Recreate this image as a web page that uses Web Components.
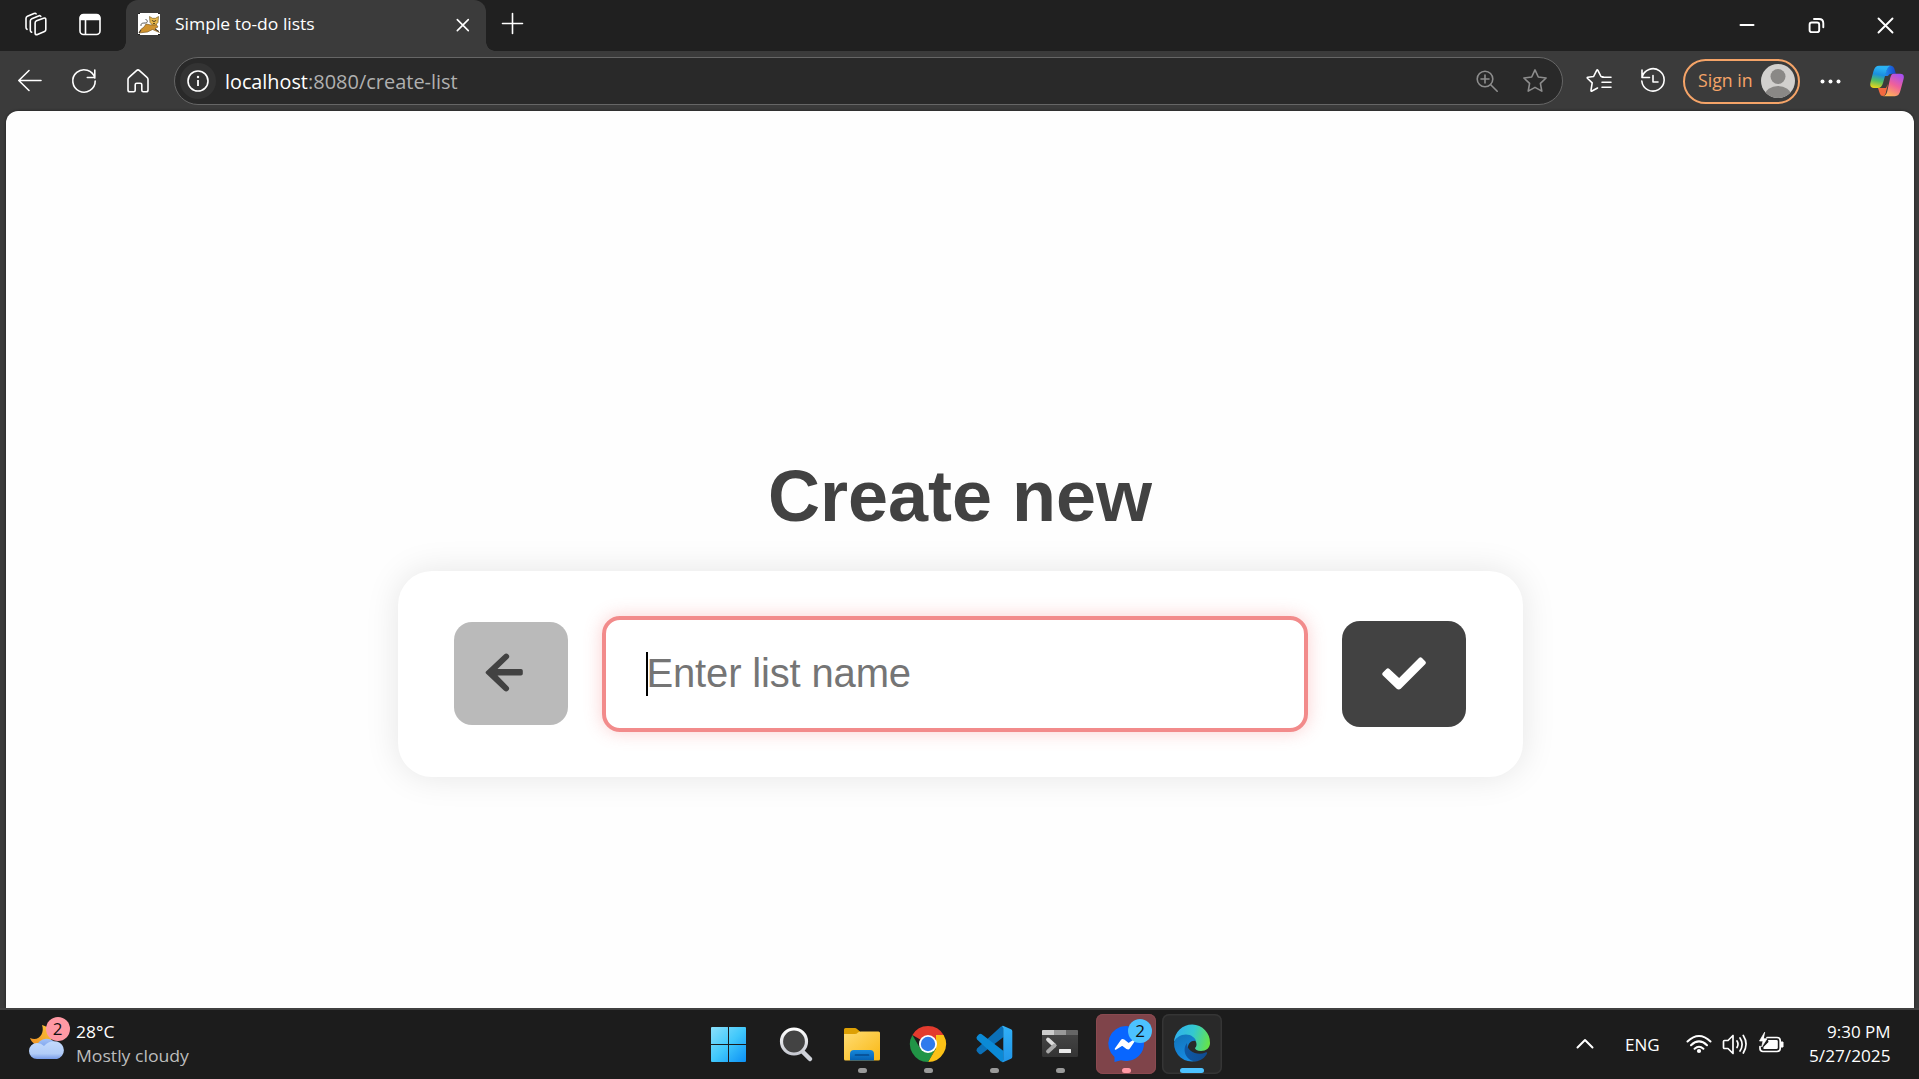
<!DOCTYPE html>
<html lang="en">
<head>
<meta charset="utf-8">
<title>Simple to-do lists</title>
<style>
html,body{margin:0;height:100%;overflow:hidden;background:#3b3b3b}
body{font-family:"Open Sans","Noto Sans",sans-serif}
</style>
</head>
<body>
<desktop-screen></desktop-screen>
<script>
const define = (name, html, init) => customElements.define(name, class extends HTMLElement {
  constructor() {
    super();
    const t = document.createElement('template');
    t.innerHTML = html;
    this.attachShadow({mode: 'open'}).append(t.content.cloneNode(true));
  }
  connectedCallback() { if (init) init(this); }
});

/* Text squeezed horizontally to a given width */
define('fit-text', `<style>
:host{display:block;white-space:pre;text-align:left}
span{display:inline-block;transform-origin:0 50%}
</style><span><slot></slot></span>`, el => {
  const w = +el.getAttribute('w');
  el.style.width = w + 'px';
  const s = el.shadowRoot.querySelector('span');
  s.style.transform = 'scaleX(' + w / s.offsetWidth + ')';
});

define('icon-button', `<style>
:host{display:flex;align-items:center;justify-content:center;width:54px;height:48px;flex:none;color:#fff}
::slotted(svg){display:block;fill:none;stroke:currentColor;stroke-width:1.6;stroke-linecap:round;stroke-linejoin:round;flex:none}
</style><slot></slot>`);

define('browser-tab', `<style>
:host{display:flex;align-items:center;width:360px;height:51px;margin-left:9px;box-sizing:border-box;padding:0 13px 0 12px;background:#3b3b3b;border-radius:12px 12px 0 0;position:relative;color:#fff}
:host::before,:host::after{content:"";position:absolute;bottom:0;width:9px;height:9px}
:host::before{left:-9px;background:radial-gradient(circle at 0 0,transparent 8.5px,#3b3b3b 9px)}
:host::after{right:-9px;background:radial-gradient(circle at 100% 0,transparent 8.5px,#3b3b3b 9px)}
.fav{display:block;width:22px;height:22px;margin:-3px 15px 0 0}
fit-text{font-size:17px;line-height:24px;margin-top:-4px}
.x{margin:-2px 0 0 auto;display:block}
</style>
<svg class="fav" viewBox="0 0 22 22"><path fill="#fff" d="M0 0h22v22H0z"/><path d="M0 0h2v1H0zM20 0h2v1h-2zM0 21h2v1H0zM20 21h2v1h-2z" fill="#222"/><path d="M1 20q1-4 5-6l2-3 5 1 5-1 2 3-3 1.500 4.500 4-7-3-5 2.500-4.500.5z" fill="#d0932f" stroke="#6b4c17" stroke-width=".6"/><path d="M11.500 3.500l3 1.800h3l3-1.800-.5 6-2.500 2.500h-3L12 9.500z" fill="#e8b84b" stroke="#654912" stroke-width=".6"/><path d="M14 7l1 1.500L16 8l1 .5L18 7M15 10.500h2" stroke="#382f1a" fill="none" stroke-width=".8"/><path d="M7.500 6.500c3 .5 2 4-.5 3.500-4 0-4 1-4 3" fill="none" stroke="#444" stroke-width=".9"/><path d="M17 16l4 2.500M1 20l2-3" stroke="#333" stroke-width="1"/></svg>
<fit-text w="140"><slot></slot></fit-text>
<svg class="x" width="20" height="20" viewBox="0 0 20 20" fill="none" stroke="#fff" stroke-width="1.6" stroke-linecap="round"><path d="M4.300 4.600l11 11M15.300 4.600l-11 11"/></svg>`);

define('tab-strip', `<style>
:host{display:flex;height:51px;background:#202020;padding-left:9px;flex:none}
.win{margin-left:auto;display:flex}
.win icon-button{width:69px;height:51px}
</style>
<icon-button><svg width="28" height="28" viewBox="0 0 28 28" style="margin-right:2px"><path d="M15.500 10.800l7.100-2.600q2.200-.7 2.200 1.500v9.800q0 1.500-1.300 2l-7 2.900q-2.400.9-2.400-1.500V13q0-1.600 1.400-2.200z"/><path d="M10.600 22.200q-1.300-.4-1.300-2V11q0-1.700 1.500-2.300l6.700-2.800q2-.7 2.300.5"/><path d="M6 19.300q-1-.5-1-2V8.500q0-1.500 1.400-2.200l6.600-2.800q1.600-.6 2.100.4"/></svg></icon-button>
<icon-button><svg width="28" height="28" viewBox="0 0 28 28"><rect x="4" y="4.500" width="20" height="20" rx="3.500"/><path d="M4.500 9.500V8q0-3 3-3h13q3 0 3 3v1.500z" fill="#fff"/><path d="M9.500 10v14"/></svg></icon-button>
<browser-tab>Simple to-do lists</browser-tab>
<icon-button><svg width="24" height="24" viewBox="0 0 24 24"><path d="M11.500 1.500v20M1.500 11.500h20"/></svg></icon-button>
<div class="win">
<icon-button><svg width="20" height="20" viewBox="0 0 20 20" stroke-linecap="butt"><path d="M3.500 9h13" stroke-width="2"/></svg></icon-button>
<icon-button><svg width="20" height="20" viewBox="0 0 20 20"><rect x="3.600" y="6.500" width="9.600" height="9.600" rx="2.200" stroke-width="1.900"/><path d="M8 3h5q4.300 0 4.300 4.300v4" stroke-width="1.900"/></svg></icon-button>
<icon-button><svg width="20" height="20" viewBox="0 0 20 20"><path d="M3.500 2.500l14 14M17.500 2.500l-14 14" stroke-width="1.900"/></svg></icon-button>
</div>`);

define('address-bar', `<style>
:host{display:flex;align-items:center;flex:none;width:1389px;height:48px;box-sizing:border-box;margin:0 9px;background:#292929;border:1.500px solid #666;border-radius:24px;padding:0 3px 0 5px}
.info{display:flex;align-items:center;justify-content:center;width:36px;height:36px;border-radius:50%;background:#333;margin-right:9px}
fit-text{font-size:20.500px;line-height:30px}
.host{color:#fff}.path{color:#b0b0b0}
.tools{display:flex;margin-left:auto}
.tools icon-button{color:#8d8d8d;width:48px}
</style>
<span class="info"><svg width="24" height="24" viewBox="0 0 24 24" fill="none" stroke="#fff" stroke-width="1.600"><circle cx="12" cy="12" r="10"/><path d="M12 11v6" stroke-width="1.800"/><circle cx="12" cy="8" r="1.200" fill="#fff" stroke="none"/></svg></span>
<fit-text class="host" w="83">localhost</fit-text><fit-text class="path" w="150">:8080/create-list</fit-text>
<div class="tools">
<icon-button><svg width="26" height="26" viewBox="0 0 26 26"><circle cx="11" cy="11" r="7.800"/><path d="M11 7v8M7 11h8M16.700 16.700l6.500 6.500"/></svg></icon-button>
<icon-button><svg width="28" height="28" viewBox="0 0 28 28"><path d="M14 2.900l3.300 7.100 7.800 1-5.700 5.400 1.400 7.700-6.800-3.700-6.800 3.700 1.400-7.700-5.700-5.400 7.800-1z"/></svg></icon-button>
</div>`);

define('sign-in', `<style>
:host{display:flex;align-items:center;box-sizing:border-box;width:117px;height:45px;border:2px solid #f5a468;border-radius:23px;margin:0 3px 0 3px;padding:0 3px 0 13px;justify-content:space-between;color:#f5a468;flex:none}
fit-text{font-size:18px;line-height:26px;margin-top:-2px}
</style><fit-text w="55">Sign in</fit-text>
<svg width="34" height="34" viewBox="0 0 34 34"><defs><clipPath id="c"><circle cx="17" cy="17" r="17"/></clipPath></defs><g clip-path="url(#c)"><path fill="#d2d0ce" d="M0 0h34v34H0z"/><circle cx="17" cy="12.500" r="7.500" fill="#8a8886"/><ellipse cx="17" cy="31" rx="13" ry="9" fill="#8a8886"/></g></svg>`);

define('tool-bar', `<style>
:host{display:flex;align-items:center;height:60px;padding-left:3px;box-sizing:border-box;flex:none;background:#3b3b3b}
</style>
<icon-button><svg width="28" height="28" viewBox="0 0 28 28"><path d="M25 13.500H3M13 3.500L2.800 13.500 13 23.500"/></svg></icon-button>
<icon-button><svg width="28" height="28" viewBox="0 0 28 28"><path d="M24.800 11A11.200 11.200 0 1 0 25.200 14M24.800 3v7.500h-7.500"/></svg></icon-button>
<icon-button><svg width="28" height="28" viewBox="0 0 28 28"><path d="M4 12.500q0-1.300 1-2.100l7.500-6.800q1.500-1.300 3 0l7.500 6.800q1 .8 1 2.100V23q0 1.800-1.800 1.800h-2.900q-1.500 0-1.500-1.500v-5.500q0-1.500-1.500-1.500h-3.600q-1.500 0-1.500 1.500v5.500q0 1.500-1.500 1.500H5.800Q4 24.800 4 23z"/></svg></icon-button>
<address-bar></address-bar>
<icon-button><svg width="28" height="28" viewBox="0 0 28 28"><path d="M18 9.800l-2-.3-3.100-6.200q-.6-1-1.200 0L8.600 9.500l-5.700.8q-1.300.2-.3 1.200l4.600 4.400L6 23.200q-.2 1.500 1 .8l5.500-3M17 10.300h9M17 15.300h9M17 20.300h9"/></svg></icon-button>
<icon-button><svg width="28" height="28" viewBox="0 0 28 28"><path d="M3 10.500A11.200 11.200 0 1 1 2.800 14M3 3v7.500h7.500M14 8.500V15h5"/></svg></icon-button>
<sign-in></sign-in>
<icon-button><svg width="28" height="28" viewBox="0 0 28 28"><g fill="#fff" stroke="none"><circle cx="6.500" cy="14.500" r="2"/><circle cx="14.500" cy="14.500" r="2"/><circle cx="22.500" cy="14.500" r="2"/></g></svg></icon-button>
<icon-button style="margin-left:3px"><svg width="34" height="32" viewBox="0 0 34 32" style="stroke:none"><defs>
<linearGradient id="a" x1=".5" y1="0" x2=".3" y2="1"><stop offset=".1" stop-color="#2bb2f3"/><stop offset=".4" stop-color="#1b8fdf"/><stop offset=".68" stop-color="#52bd65"/><stop offset="1" stop-color="#e8d51c"/></linearGradient>
<linearGradient id="b" x1=".8" y1="0" x2=".3" y2="1"><stop offset="0" stop-color="#a64ff3"/><stop offset=".5" stop-color="#f0609a"/><stop offset="1" stop-color="#ffb557"/></linearGradient>
<linearGradient id="d"><stop offset="0" stop-color="#2190ef"/><stop offset="1" stop-color="#1745cb"/></linearGradient></defs>
<path d="M18 .8h3q2.400 0 3.200 2.500l1.700 5.400h-4q-3 0-4 2.300h-3.500z" fill="url(#d)"/><path d="M8 23h8l2-4-1.500 6q-1 6-3.500 6-2.500 0-3.200-2.500z" fill="#f3693f"/>
<path d="M9 .8h12.500q-3.500 0-5 5L13 18q-1.400 5-5 5H4Q-1 23 .6 17L3.500 6Q5 .8 9 .8z" fill="url(#a)"/>
<path d="M23.500 8.700H30q5 0 3.500 5.500L30.300 26q-1.300 5.200-5.300 5.200H12.500q3.500 0 4.700-4.700l3-13.500q1-4.300 3.300-4.300z" fill="url(#b)"/></svg></icon-button>`);

define('list-form', `<style>
:host{display:flex;align-items:center;gap:34px;box-sizing:border-box;width:1125px;height:206px;padding:0 57px 0 56px;background:#fff;border-radius:34px;box-shadow:0 0 34px rgba(0,0,0,.1)}
.b{display:flex;align-items:center;justify-content:center;border-radius:18px;flex:none}
.back{width:114px;height:103px;background:#bababa;margin-top:-1px}
.ok{width:124px;height:106px;background:#424242}
.in{flex:1;height:116px;box-sizing:border-box;border:4px solid #f28b8b;border-radius:18px;box-shadow:0 0 18px rgba(242,110,110,.32);padding:0 40px;display:flex;align-items:center;font:40px/46px "Liberation Sans",Arial,sans-serif;color:#757575}
.caret{width:2px;height:44px;background:#000;margin-right:-2px}
.ph{margin:-2px 0 0 1px;letter-spacing:-.16px}
svg{display:block}
</style>
<div class="b back"><svg width="40" height="40" viewBox="0 0 40 40" style="margin:-4px 14px 0 0"><path d="M37 17H13.500L24.300 6.400q2-2 0-4-2-2-4.200 0L2 19.600q-.8.900 0 1.800l18 17q2.200 2 4.200 0 2-2 0-4L13.500 23.600H37q1.800 0 1.800-1.800v-3q0-1.800-1.800-1.800z" fill="#424242"/></svg></div>
<div class="in"><span class="caret"></span><span class="ph">Enter list name</span></div>
<div class="b ok"><svg width="44" height="34" viewBox="0 0 44 34"><path d="M16.700 32.500q-1.200 0-2-.8L.9 18.500q-1.400-1.500 0-3l3.500-3.500q1.500-1.400 3 0l9.700 9L37 1q1.500-1.400 3 0l3.200 3.300q1.400 1.500 0 3L18.700 31.700q-.8.800-2 .8z" fill="#fff"/></svg></div>`);

define('web-page', `<style>
:host{display:flex;flex-direction:column;align-items:center;flex:none;width:1908px;height:897px;margin-left:6px;box-sizing:border-box;padding-top:344px;background:#fefefe;border-radius:12px 12px 0 0;box-shadow:0 0 3px rgba(0,0,0,.5)}
h1{margin:0 0 33px;font:bold 72px/83px "Liberation Sans",Arial,sans-serif;color:#424242}
</style><h1>Create new</h1><list-form></list-form>`);

define('task-tile', `<style>
:host{display:block;width:60px;height:60px;flex:none;border-radius:7px;position:relative;box-sizing:border-box}
:host([alert]){background:#7f444a;box-shadow:inset 0 0 0 1px #8a4a50}
:host([active]){background:#292929;box-shadow:inset 0 0 0 1.500px #353535}
:host([run])::after{content:"";position:absolute;left:26px;top:54px;width:9px;height:5px;border-radius:3px;background:#9a9a9a}
:host([alert])::after{background:#ff99a4}
:host([active])::after{left:18px;width:24px;background:#4cc2ff}
::slotted(svg){display:block;width:60px;height:60px}
</style><slot></slot>`);

define('count-badge', `<style>
:host{position:absolute;width:24px;height:24px;border-radius:50%;text-align:center;font-size:17px;line-height:23px;color:#111;background:var(--c)}
</style><slot></slot>`);

define('weather-widget', `<style>
:host{display:flex;width:300px;padding-left:29px;box-sizing:border-box;position:relative}
.i{width:36px;height:60px;margin-right:11px;margin-top:-1px}
.t{font-size:17px;line-height:24px;color:#fff;padding-top:6px}
.t fit-text+fit-text{color:#bdbdbd}
count-badge{left:45.500px;top:3px;--c:#ff99a4}
</style>
<svg class="i" viewBox="0 0 36 60"><defs><linearGradient id="m" x1="0" y1="1" x2="1" y2="0"><stop stop-color="#ef8f22"/><stop offset="1" stop-color="#fbc63b"/></linearGradient><linearGradient id="k" x2="0" y2="1"><stop stop-color="#c3dafc"/><stop offset=".7" stop-color="#b1ccf7"/><stop offset="1" stop-color="#779be8"/></linearGradient><linearGradient id="k2" x2="0" y2="1"><stop stop-color="#a3c2f7"/><stop offset="1" stop-color="#7ea4ee"/></linearGradient></defs>
<path d="M13 12c3 8-3 17-12 13 3 9 16 11 21 3 3-7-1-14-9-16z" fill="url(#m)"/>
<path d="M7 34a11 11 0 0 1 21-1z" fill="url(#k2)"/>
<path d="M8 46a8 8 0 0 1 0-16q4 0 7 3 5-6 13-4.500a9 9 0 0 1 0 17.500z" fill="url(#k)"/></svg>
<div class="t"><fit-text w="38">28°C</fit-text><fit-text w="113">Mostly cloudy</fit-text></div>
<count-badge>2</count-badge>`);

define('system-tray', `<style>
:host{display:flex;color:#fff;font-size:17px;height:60px;align-items:center;width:346px;flex:none}
svg{display:block;flex:none;fill:none;stroke:#fff;stroke-width:1.700;stroke-linecap:round;stroke-linejoin:round}
.dt{margin-left:auto;margin-right:28px;line-height:24px;display:flex;flex-direction:column;align-items:flex-end;margin-top:-1px}
.eng{margin:0 25px 0 30px}
</style>
<svg style="margin-left:2px" width="20" height="20" viewBox="0 0 20 20"><path d="M2.500 13.500L10 6l7.500 7.500" stroke-width="2"/></svg>
<fit-text class="eng" w="35">ENG</fit-text>
<svg width="28" height="28" viewBox="0 0 28 28" stroke-linecap="butt"><path d="M2.500 11.500q11.500-11 23 0M6 15.200q8-7.600 16 0M9.600 18.800q4.400-4 8.800 0" stroke-width="2"/><circle cx="14" cy="21" r="2.100" fill="#fff" stroke="none"/></svg>
<svg style="margin-left:8px" width="28" height="28" viewBox="0 0 28 28"><path d="M2.500 11.500q0-1 1-1h3.500l5-5v18l-5-5H3.500q-1 0-1-1zM16 11q2 3 0 6.500M19 8q4.200 6.500 0 13M22.300 5.500q5.500 8.500 0 17.500"/></svg>
<svg style="margin-left:8px" width="28" height="28" viewBox="0 0 28 28"><path d="M10 7.500h10q3.200 0 3.200 3.200v7.600q0 3.200-3.200 3.200H6q-3 0-3-3v-2"/><path d="M11 10h8.500q1.300 0 1.300 1.300v6.400q0 1.300-1.300 1.300H6.500v-2l5-5z" fill="#fff" stroke="none"/><path d="M24 12h2v5h-2z" fill="#fff" stroke-width="1"/><path d="M7.500 2.500L2.500 11H6l-1.300 6L10 8.700H6.700z" fill="#fff" stroke-width=".7"/></svg>
<div class="dt"><fit-text w="64">9:30 PM</fit-text><fit-text w="82">5/27/2025</fit-text></div>`);

define('task-bar', `<style>
:host{display:flex;justify-content:space-between;height:71px;flex:none;background:#1c1c1c;border-top:2px solid #404040;box-sizing:border-box;padding-top:4px}
.apps{display:flex;gap:6px;width:522px;margin-right:51px}
weather-widget{margin-right:100px}
count-badge{left:32px;top:5px;--c:#4cc2ff}
</style>
<weather-widget></weather-widget>
<div class="apps">
<task-tile><svg viewBox="0 0 60 60"><defs><linearGradient id="w" x2="1" y2="1"><stop stop-color="#8be0fb"/><stop offset=".5" stop-color="#41c8fb"/><stop offset="1" stop-color="#0b90f5"/></linearGradient></defs><path fill="url(#w)" d="M12 13h15.700a.5.500 0 0 1 .3.500V30H11V14q0-1 1-1zM29 13h16q1 0 1 1v16H29zM11 31h17v17H12q-1 0-1-1zM29 31h17v16q0 1-1 1H29z"/></svg></task-tile>
<task-tile><svg viewBox="0 0 60 60"><defs><linearGradient id="s" x2="0" y2="1"><stop stop-color="#fff"/><stop offset="1" stop-color="#c7c9d1"/></linearGradient></defs><path d="M37 38l7 7" stroke="#cfd2d9" stroke-width="4.500" stroke-linecap="round"/><circle cx="28" cy="27.500" r="12.500" fill="#434343" stroke="url(#s)" stroke-width="3.200"/></svg></task-tile>
<task-tile run><svg viewBox="0 0 60 60"><defs><linearGradient id="f" x2="1" y2="1"><stop stop-color="#ffdc73"/><stop offset="1" stop-color="#f9b813"/></linearGradient><linearGradient id="g" x2="0" y2="1"><stop stop-color="#1688dc"/><stop offset="1" stop-color="#0560b1"/></linearGradient></defs><path d="M12 15.500q0-1.500 1.500-1.500h9.500q1 0 2 1l3 2.500V24H12z" fill="#dda004"/><path d="M12 20h11q1.500 0 3-1.500 1-1 3-1h17.500q1.500 0 1.500 1.500v26q0 1.500-1.500 1.500h-33Q12 46.500 12 45z" fill="url(#f)"/><path d="M18 46.500V40q0-4 4-4h16q4 0 4 4v6.500z" fill="url(#g)"/><path d="M23.500 41h13" stroke="#064a8d" stroke-width="1.700" stroke-linecap="round"/></svg></task-tile>
<task-tile run><svg viewBox="0 0 60 60"><path d="M30 30L14.400 21A18 18 0 0 1 45.600 21z" fill="#e33b2e"/><path d="M14.400 21L22.200 34.500 30 39l0 9A18 18 0 0 1 14.400 21z" fill="#219446"/><path d="M30 48l8-13.500V21h7.600A18 18 0 0 1 30 48z" fill="#fbc116"/><path d="M22.200 34.500L30 48l7.800-13.500z" fill="#219446"/><path d="M30 48l8-14 4-8z" fill="#fbc116"/><circle cx="30" cy="30" r="9" fill="#fff"/><circle cx="30" cy="30" r="7.200" fill="#2f7bed"/></svg></task-tile>
<task-tile run><svg viewBox="0 0 60 60"><defs><linearGradient id="v" x2="0" y2="1"><stop stop-color="#31b0f7"/><stop offset="1" stop-color="#2196e8"/></linearGradient></defs><path d="M13 34.500q-1.300 2 .3 3.600l1.700 1.700q1.200 1 2.800 0L39.500 23V12L37 12.500z" fill="#0b70b8"/><path d="M13 25.500q-1.300-2 .3-3.600l1.700-1.700q1.200-1 2.800 0L39.500 37v11L37 47.500z" fill="#0b8ad6"/><path d="M38 12l1-.2 8 3.500q1.300.6 1.300 2v25.400q0 1.400-1.300 2l-8 3.500-1-.2 1.300-2V14z" fill="url(#v)"/></svg></task-tile>
<task-tile run><svg viewBox="0 0 60 60"><defs><linearGradient id="t" x2="0" y2="1"><stop stop-color="#474747"/><stop offset="1" stop-color="#343434"/></linearGradient></defs><rect x="12" y="16" width="36" height="27" rx="1.500" fill="url(#t)"/><path d="M12 21v-4q0-1 1-1h11v5z" fill="#ccc"/><path d="M24 16h12v5H24z" fill="#999"/><path d="M36 16h11q1 0 1 1v4H36z" fill="#666"/><path d="M18 25.500l6.500 6" stroke="#ddd" stroke-width="3.800" stroke-linecap="round"/><path d="M18 37.500l6.500-6" stroke="#a9a9a9" stroke-width="3.800" stroke-linecap="round"/><rect x="29" y="35" width="12" height="4" rx=".5" fill="#e9e9e9"/></svg></task-tile>
<task-tile run alert><svg viewBox="0 0 60 60"><path d="M30 12a18 17.500 0 1 1-5 34.300L18.500 48V43A17.600 17.600 0 0 1 30 12z" fill="#0866ff"/><path d="M19.500 35l5.800-8.300q1-1.400 2.500-.5l4.700 3.600 6.500-4.100-5.600 8.200q-1 1.400-2.500.5l-4.600-3.500z" fill="#fff" stroke="#fff" stroke-width="1.500" stroke-linejoin="round"/></svg><count-badge>2</count-badge></task-tile>
<task-tile run active><svg viewBox="0 0 60 60"><defs><linearGradient id="e1" x1="0" y1=".4" x2="1" y2=".6"><stop stop-color="#2fb0ee"/><stop offset=".5" stop-color="#34c8cf"/><stop offset="1" stop-color="#66e447"/></linearGradient><linearGradient id="e2" x2=".4" y2="1"><stop stop-color="#1173b8"/><stop offset="1" stop-color="#178be2"/></linearGradient><linearGradient id="e3"><stop stop-color="#0e58a5"/><stop offset="1" stop-color="#104c90"/></linearGradient></defs>
<path d="M12 28A18 18 0 0 1 48 29c0 5-4 8-9 8-4 0-6-1.500-6-3 2-1.500 2-5 0-8-5-7-16-6-21 2z" fill="url(#e1)"/><path d="M12 29c2-8 13-11 19-6 2 1.500 3 3 3 4-6-1-9 4-8 10 1 5 4 9 8 10A18 18 0 0 1 12 29z" fill="url(#e2)"/><path d="M25 29c-5 6-2 17 8 18.500 6-.5 10-4 12-8 .5-1-.5-1.800-1.500-1-8 3.500-19-1-18.500-9.500z" fill="url(#e3)"/></svg></task-tile>
</div>
<system-tray></system-tray>`);

define('desktop-screen', `<style>
:host{display:flex;flex-direction:column;width:1919px;height:1079px;background:#3b3b3b}
</style><tab-strip></tab-strip><tool-bar></tool-bar><web-page></web-page><task-bar></task-bar>`);
</script>
</body>
</html>
